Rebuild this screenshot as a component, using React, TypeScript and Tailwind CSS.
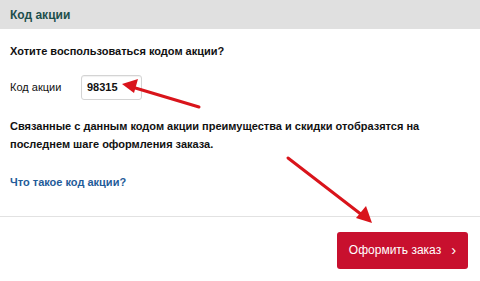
export default function App() {
  return (
    <div className="relative h-[281px] w-[480px] overflow-hidden bg-white font-['Liberation_Sans',Arial,sans-serif] text-[#111]">
      <header className="flex h-[29px] items-center bg-[#e0e0e0] px-[10px]">
        <span className="text-[12px] font-bold text-[#1d4f4c]">Код акции</span>
      </header>

      <div className="px-[10px] pt-[13px]">
        <h2 className="text-[11px] font-bold leading-[18px]">Хотите воспользоваться кодом акции?</h2>

        <div className="mt-[15px] flex items-center gap-[14px]">
          <label className="w-[57px] text-[11px]">Код акции</label>
          <div className="flex h-[25px] w-[61px] items-center rounded-[3px] border border-[#d4d4d4] px-[5px] text-[11px] font-bold shadow-[inset_0_1px_1px_rgba(0,0,0,0.06)]">
            98315
          </div>
        </div>

        <p className="mt-[17px] text-[11px] font-bold leading-[18px]">
          Связанные с данным кодом акции преимущества и скидки отобразятся на
          <br />
          последнем шаге оформления заказа.
        </p>

        <a href="#" className="mt-[21px] block text-[11px] font-bold text-[#1f5c99]">
          Что такое код акции?
        </a>
      </div>

      <div className="mt-[25px] border-t border-[#e2e2e2]" />

      <div className="flex justify-end px-[12px] pt-[15px]">
        <button className="flex h-[37px] w-[131px] items-center justify-center gap-[10px] rounded-[3px] bg-[#c8102e] text-[12px] text-white">
          <span>Оформить заказ</span>
          <span className="text-[15px]">›</span>
        </button>
      </div>

      <svg className="pointer-events-none absolute left-0 top-0" width="480" height="281" viewBox="0 0 480 281">
        <line x1="199" y1="107" x2="132" y2="87" stroke="#d9141b" strokeWidth="3" strokeLinecap="round" />
        <polygon points="122,84 138,79 134,93" fill="#d9141b" />
        <line x1="288" y1="158" x2="362" y2="215" stroke="#d9141b" strokeWidth="3" strokeLinecap="round" />
        <polygon points="372,223 356,218 366,206" fill="#d9141b" />
      </svg>
    </div>
  );
}
